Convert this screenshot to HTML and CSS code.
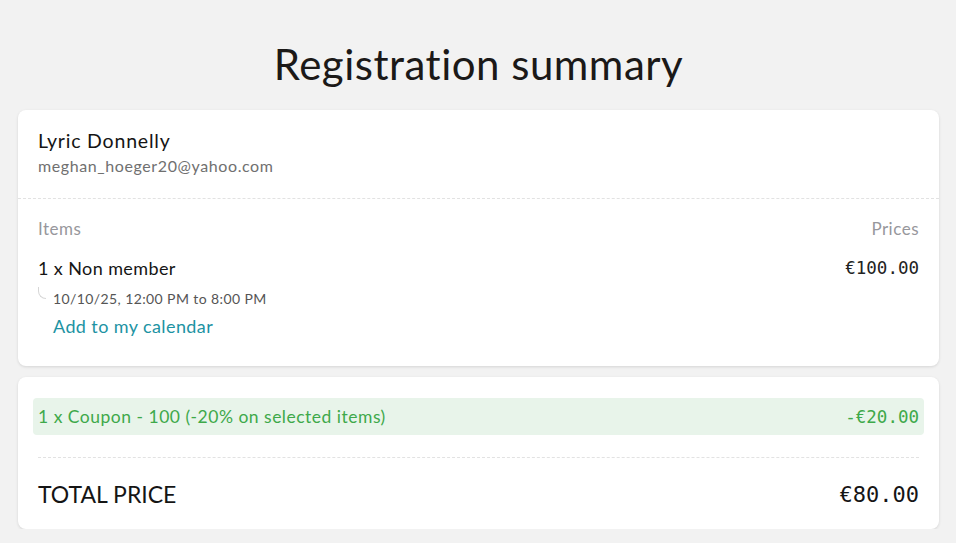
FILE: index.html
```html
<!DOCTYPE html>
<html>
<head>
<meta charset="utf-8">
<link rel="stylesheet" href="styles.css">
</head>
<body>
<main class="page">
  <h1 class="title">Registration summary</h1>
  <section class="card">
    <div class="buyer">
      <div class="name">Lyric Donnelly</div>
      <div class="email">meghan_hoeger20@yahoo.com</div>
    </div>
    <div class="items">
      <div class="row head">
        <span>Items</span>
        <span>Prices</span>
      </div>
      <div class="row item">
        <span>1 x Non member</span>
        <span class="price">€100.00</span>
      </div>
      <div class="sub">
        <span class="hook"></span>
        <span class="date">10/10/25, 12:00 PM to 8:00 PM</span>
      </div>
      <a class="cal" href="#">Add to my calendar</a>
    </div>
  </section>
  <section class="card totals">
    <div class="coupon">
      <span>1 x Coupon - 100 (-20% on selected items)</span>
      <span class="price">-€20.00</span>
    </div>
    <div class="total">
      <span>TOTAL PRICE</span>
      <span class="price big">€80.00</span>
    </div>
  </section>
</main>
</body>
</html>
```
FILE: styles.css
```css
html, body {
  margin: 0;
  padding: 0;
  background: #f2f2f2;
}
body {
  font-family: "Lato", "Open Sans", sans-serif;
  color: #1c1c1c;
}
.page {
  padding: 0 17px 0 18px;
  display: flex;
  flex-direction: column;
}
.title {
  margin: 0;
  padding-top: 40px;
  height: 110px;
  box-sizing: border-box;
  text-align: center;
  font-weight: 400;
  font-size: 42px;
  letter-spacing: 0.5px;
  line-height: 48px;
  color: #1b1918;
}
.card {
  background: #fff;
  border-radius: 8px;
  box-shadow: 0 1px 3px rgba(0,0,0,0.12);
}
.buyer {
  padding: 18px 20px 20px;
  border-bottom: 1px dashed #e2e2e2;
  height: 89px;
  box-sizing: border-box;
}
.name {
  font-size: 19.5px;
  letter-spacing: 0.8px;
  line-height: 26px;
  color: #151515;
}
.email {
  font-size: 16px;
  letter-spacing: 0.6px;
  line-height: 20px;
  color: #707070;
  margin-top: 2px;
}
.items {
  padding: 18px 20px 20px;
  height: 167px;
  box-sizing: border-box;
}
.row {
  display: flex;
  justify-content: space-between;
  align-items: center;
}
.head {
  font-size: 17px;
  letter-spacing: 0.5px;
  line-height: 24px;
  color: #97979c;
}
.item {
  margin-top: 15px;
  font-size: 18px;
  letter-spacing: 0.4px;
  line-height: 24px;
  color: #151515;
}
.price {
  font-family: "DejaVu Sans Mono", monospace;
  letter-spacing: 0;
}
.item .price {
  font-size: 17.5px;
  color: #222;
}
.sub {
  display: flex;
  align-items: flex-end;
  margin-top: 7px;
  height: 22px;
}
.hook {
  width: 8px;
  height: 12px;
  border-left: 1px solid #d6d6d6;
  border-bottom: 1px solid #d6d6d6;
  border-bottom-left-radius: 8px;
  box-sizing: border-box;
  margin-right: 7px;
  align-self: flex-start;
  margin-top: 0;
}
.date {
  font-size: 14px;
  letter-spacing: 0.4px;
  line-height: 20px;
  color: #555;
}
.cal {
  display: block;
  margin-left: 15px;
  margin-top: 5px;
  font-size: 18px;
  letter-spacing: 0.4px;
  line-height: 24px;
  color: #1d93a3;
  text-decoration: none;
}
.totals {
  margin-top: 11px;
  padding: 21px 15px 0;
  height: 152px;
  box-sizing: border-box;
}
.coupon {
  display: flex;
  justify-content: space-between;
  align-items: center;
  background: #e8f4ea;
  border-radius: 4px;
  height: 37px;
  padding: 0 5px;
  font-size: 17.5px;
  letter-spacing: 0.5px;
  color: #3ea94a;
}
.coupon .price {
  font-size: 17.5px;
}
.total {
  margin: 22px 5px 0;
  border-top: 1px dashed #e2e2e2;
  display: flex;
  justify-content: space-between;
  align-items: center;
  height: 72px;
  font-size: 23px;
  color: #151515;
}
.big {
  font-size: 22px;
}
```
